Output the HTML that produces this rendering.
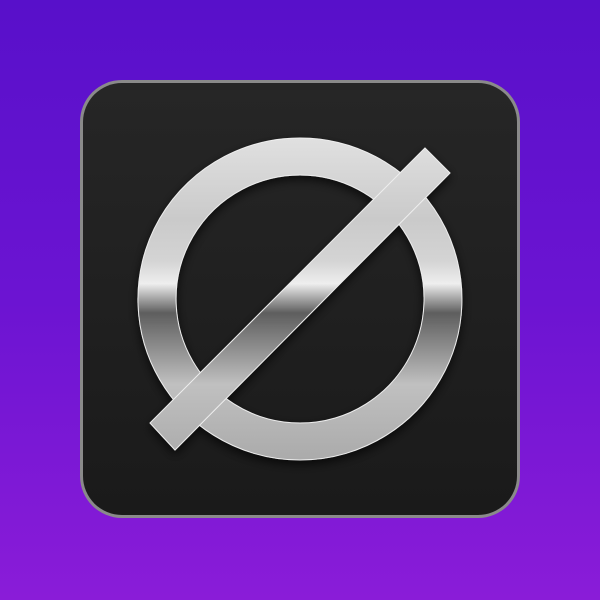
<!DOCTYPE html>
<html><head><style>
html,body{margin:0;padding:0;width:600px;height:600px;overflow:hidden}
body{background:linear-gradient(180deg,#5810ca 0%,#6c14d2 50%,#8a1cd8 100%)}
</style></head><body>
<svg width="600" height="600" viewBox="0 0 600 600" style="position:absolute;left:0;top:0">
<defs>
<linearGradient id="sq" x1="0" y1="0" x2="0" y2="1">
<stop offset="0" stop-color="#262626"/><stop offset="1" stop-color="#1a1a1a"/>
</linearGradient>
<linearGradient id="metal" gradientUnits="userSpaceOnUse" x1="0" y1="138" x2="0" y2="462">
<stop offset="0" stop-color="#e0e0e0"/>
<stop offset="0.25" stop-color="#cacaca"/>
<stop offset="0.38" stop-color="#d4d4d4"/>
<stop offset="0.45" stop-color="#eeeeee"/>
<stop offset="0.54" stop-color="#5e5e5e"/>
<stop offset="0.64" stop-color="#8a8a8a"/>
<stop offset="0.76" stop-color="#c0c0c0"/>
<stop offset="1" stop-color="#aaaaaa"/>
</linearGradient>
<filter id="sh" x="-20%" y="-20%" width="140%" height="140%">
<feDropShadow dx="0" dy="4" stdDeviation="5" flood-color="#000" flood-opacity="0.7"/>
</filter>
</defs>
<rect x="80" y="80" width="440" height="438" rx="42" fill="#8a8a8a"/>
<rect x="83" y="83" width="434" height="432" rx="39" fill="url(#sq)"/>
<g filter="url(#sh)">
<path fill-rule="evenodd" fill="url(#metal)" stroke="#eee" stroke-width="1"
 d="M300 138 A162 161 0 1 1 299.9 138 Z M300 175 A124 124 0 1 0 300.1 175 Z"/>
<polygon fill="url(#metal)" stroke="#eee" stroke-width="1" points="425,148 450,173 175,450 150,423"/>
</g>
</svg>
</body></html>
